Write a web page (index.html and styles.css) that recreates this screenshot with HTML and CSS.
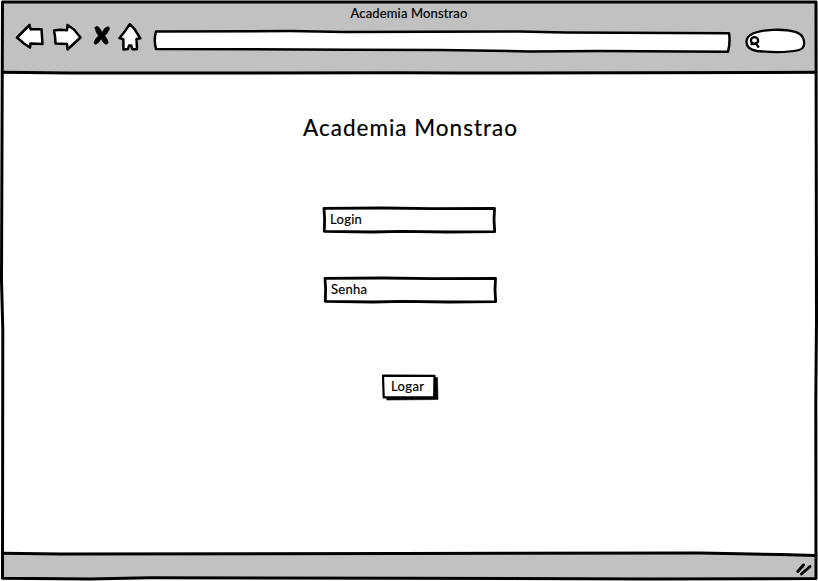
FILE: index.html
```html
<!DOCTYPE html>
<html lang="pt-BR">
<head>
<meta charset="utf-8">
<title>Academia Monstrao</title>
<link rel="stylesheet" href="styles.css">
</head>
<body>
<div class="browser">
  <header class="chrome">
    <div class="window-title"><span>Academia Monstrao</span></div>
    <nav class="toolbar">
      <svg class="icon back" viewBox="14 21 32 31"><path d="M17 37.500 L29.500 25 L30.500 29.200 L41.500 29.200 L42.500 44 L30.500 43.500 L30 47.500 L24 43.500 Z"/></svg>
      <svg class="icon forward" viewBox="51 21 32 31"><path d="M54 30.500 L60 29.800 L67 30.200 L67.500 25 L74 29.500 L80.500 37.500 L67.500 49.500 L67 44 L55.500 43.500 Q55.500 37 54 30.500 Z"/></svg>
      <svg class="icon stop" viewBox="92 21 20 31"><path class="ink" d="M95 28 Q95 26 98 26.500 Q100.500 28.500 102 32.500 Q104.500 27.500 107.500 26.800 Q110 26.500 109.300 29.500 Q107.500 33.500 104.800 35.800 Q108 39.500 108.200 42.500 Q107.500 45 105 44 Q102.500 42 101 39 Q99 43 96 44.300 Q93.500 44.500 94 42 Q95.500 38.500 98.500 35.800 Q95.500 32 95 28 Z"/></svg>
      <svg class="icon home" viewBox="117 21 25 31"><path d="M129.800 24.200 L134.500 29 L140.300 38.300 L136.500 39 L137 49.300 L132.300 49.300 L131.300 45.500 L129 45.500 L128 49 L123.500 49.500 L123.300 39.300 L119.500 38 Q125 32 129.800 24.200 Z"/></svg>
      <svg class="address" viewBox="152 28 581 26"><path d="M156 31.500 L290 31 L345 32 L520 31.500 L565 32.500 L729 33.300 Q730.500 42 728 51.800 L600 51 L530 51.400 L440 50 L350 49.700 L156 49 Q153.500 40 156 31.500 Z"/></svg>
      <svg class="search" viewBox="744 27 63 28"><path d="M757 51 Q746 49 746.500 41 Q747.500 31 773 29.800 Q801 29 803.500 39 Q806 48 799 50 Q783 53.500 757 51 Z"/><ellipse cx="754.500" cy="40.500" rx="3.600" ry="3.300"/><path d="M751.500 44.200 L756 43.600 M755.800 43.500 L758.300 46.800"/></svg>
    </nav>
  </header>
  <main class="content">
    <h1><span>Academia Monstrao</span></h1>
    <form class="login-form">
      <label class="field login"><svg class="outline" viewBox="0 0 174 28"><path d="M2 2.300 L60 2 L110 2.700 L172.500 2.500 L172 14 L172.700 25.600 L125 26 L80 25.400 L50 26 L2.300 25.300 L2.600 13 Z"/></svg><span>Login</span></label>
      <label class="field senha"><svg class="outline" viewBox="0 0 174 28"><path d="M2 2.300 L60 2 L110 2.700 L172.500 2.500 L172 14 L172.700 25.600 L125 26 L80 25.400 L50 26 L2.300 25.300 L2.600 13 Z"/></svg><span>Senha</span></label>
      <button class="submit" type="button"><svg class="outline" viewBox="0 0 58 28"><path class="ink" d="M6 5 L56.500 4.500 L57 26.500 L6 27 Z"/><path class="thin" d="M2 2.600 L53.500 2.800 L53.200 24 L2.700 24.400 Z"/></svg><span>Logar</span></button>
    </form>
  </main>
  <footer class="status">
    <svg class="grip" viewBox="795 559 19 18"><path d="M797.800 570.500 L803.500 564 M801.500 573 L810 565.500"/></svg>
  </footer>
  <svg class="frame" viewBox="0 0 818 581"><path d="M2.500 2 L816 2 L816.500 320 L815.800 400 L816 578.500 L650 579 L400 578.200 L150 577.800 L90 579 L2.500 578.300 L2.800 330 L1.500 280 L2.500 2"/><path d="M2.500 72.300 L70 73 L400 72.800 L460 73.100 L816 72.300"/><path d="M2.500 553.200 L60 554 L400 553.500 L700 553 L780 554.500 L816 555.500"/></svg>
</div>
</body>
</html>
```
FILE: styles.css
```css
* { box-sizing: border-box; }
body {
  margin: 0;
  background: #fff;
  color: #000;
  font-family: Lato, "Open Sans", sans-serif;
  font-size: 13px;
  -webkit-text-stroke: 0.2px #000;
}
.browser {
  position: relative;
  display: grid;
  grid-template-rows: 73px 1fr 25px;
  width: 818px;
  height: 581px;
  padding: 1px 2px 2px;
  overflow: hidden;
}
svg {
  display: block;
  flex: none;
  fill: #fff;
  stroke: #000;
  stroke-width: 2.5;
  stroke-linejoin: round;
  stroke-linecap: round;
}
.ink { fill: #000; stroke-width: 0.6; }
.thin { stroke-width: 2.2; }
.chrome, .status { background: #c1c1c1; }
.window-title {
  height: 20px;
  padding-top: 4px;
  line-height: 16px;
  text-align: center;
  letter-spacing: 0.15px;
}
.toolbar { display: flex; align-items: flex-start; padding-left: 12px; }
.icon { height: 31px; }
.back { width: 32px; }
.forward { width: 32px; margin-left: 5px; }
.stop { width: 20px; margin-left: 9px; }
.home { width: 25px; margin-left: 5px; }
.address { width: 581px; height: 26px; margin: 7px 0 0 10px; }
.search { width: 63px; height: 28px; margin: 6px 0 0 11px; stroke-width: 2.3; }
.content { display: flex; flex-direction: column; align-items: center; }
h1 {
  margin: 39px 0 0 3px;
  font-size: 22.5px;
  font-weight: 400;
  line-height: 30px;
  letter-spacing: 1px;
}
.login-form {
  display: flex;
  flex-direction: column;
  align-items: center;
  margin-top: 63px;
}
.field, .submit { position: relative; display: flex; line-height: 16px; }
.field { width: 174px; height: 28px; padding: 5px 8px; letter-spacing: 0.3px; }
.senha { margin: 42px 0 0 2px; }
.field span, .submit span { position: relative; }
.outline { position: absolute; inset: 0; width: 100%; height: 100%; }
.field .outline { stroke-width: 2.8; }
.submit {
  width: 58px;
  height: 28px;
  margin: 69px 0 0 2px;
  padding: 5px 10px;
  border: 0;
  background: none;
  color: #000;
  font: inherit;
  line-height: 16px;
  letter-spacing: 0.4px;
}
.status { display: flex; justify-content: flex-end; padding: 6px 2px 0 0; }
.grip { width: 19px; height: 18px; stroke-width: 3; fill: none; }
.frame {
  position: absolute;
  inset: 0;
  width: 818px;
  height: 581px;
  fill: none;
  stroke-width: 3;
  pointer-events: none;
}
```
